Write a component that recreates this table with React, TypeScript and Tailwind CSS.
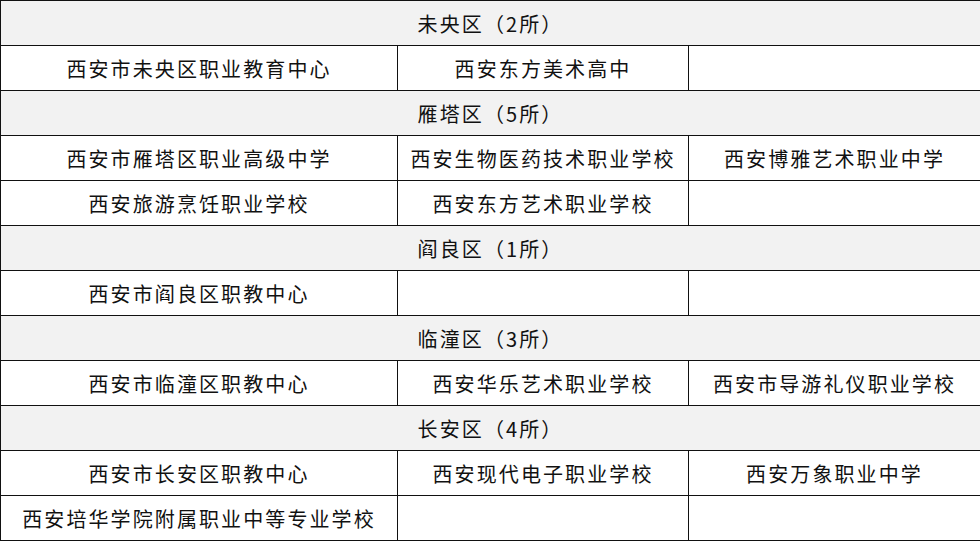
import { Fragment } from "react";

const sections: { name: string; rows: string[][] }[] = [
  { name: "未央区（2所）", rows: [["西安市未央区职业教育中心", "西安东方美术高中", ""]] },
  {
    name: "雁塔区（5所）",
    rows: [
      ["西安市雁塔区职业高级中学", "西安生物医药技术职业学校", "西安博雅艺术职业中学"],
      ["西安旅游烹饪职业学校", "西安东方艺术职业学校", ""],
    ],
  },
  { name: "阎良区（1所）", rows: [["西安市阎良区职教中心", "", ""]] },
  { name: "临潼区（3所）", rows: [["西安市临潼区职教中心", "西安华乐艺术职业学校", "西安市导游礼仪职业学校"]] },
  {
    name: "长安区（4所）",
    rows: [
      ["西安市长安区职教中心", "西安现代电子职业学校", "西安万象职业中学"],
      ["西安培华学院附属职业中等专业学校", "", ""],
    ],
  },
];

export default function App() {
  return (
    <div
      className="w-[980px] h-[541px] bg-white text-[#111] text-[20px] tracking-[2.1px]"
      style={{ fontFamily: '"Noto Sans CJK SC", "Noto Sans", sans-serif' }}
    >
      <table className="w-[980px] border-collapse table-fixed">
        <colgroup>
          <col className="w-[397px]" />
          <col className="w-[291px]" />
          <col className="w-[292px]" />
        </colgroup>
        <tbody>
          {sections.map((s) => (
            <Fragment key={s.name}>
              <tr className="h-[45px] bg-[#f2f2f2]">
                <td colSpan={3} className="border border-[#111] text-center p-0 pt-[2px]">
                  {s.name}
                </td>
              </tr>
              {s.rows.map((r, i) => (
                <tr key={i} className="h-[45px]">
                  {r.map((c, j) => (
                    <td key={j} className="border border-[#111] text-center p-0 pt-[2px] whitespace-nowrap">
                      {c}
                    </td>
                  ))}
                </tr>
              ))}
            </Fragment>
          ))}
        </tbody>
      </table>
    </div>
  );
}
